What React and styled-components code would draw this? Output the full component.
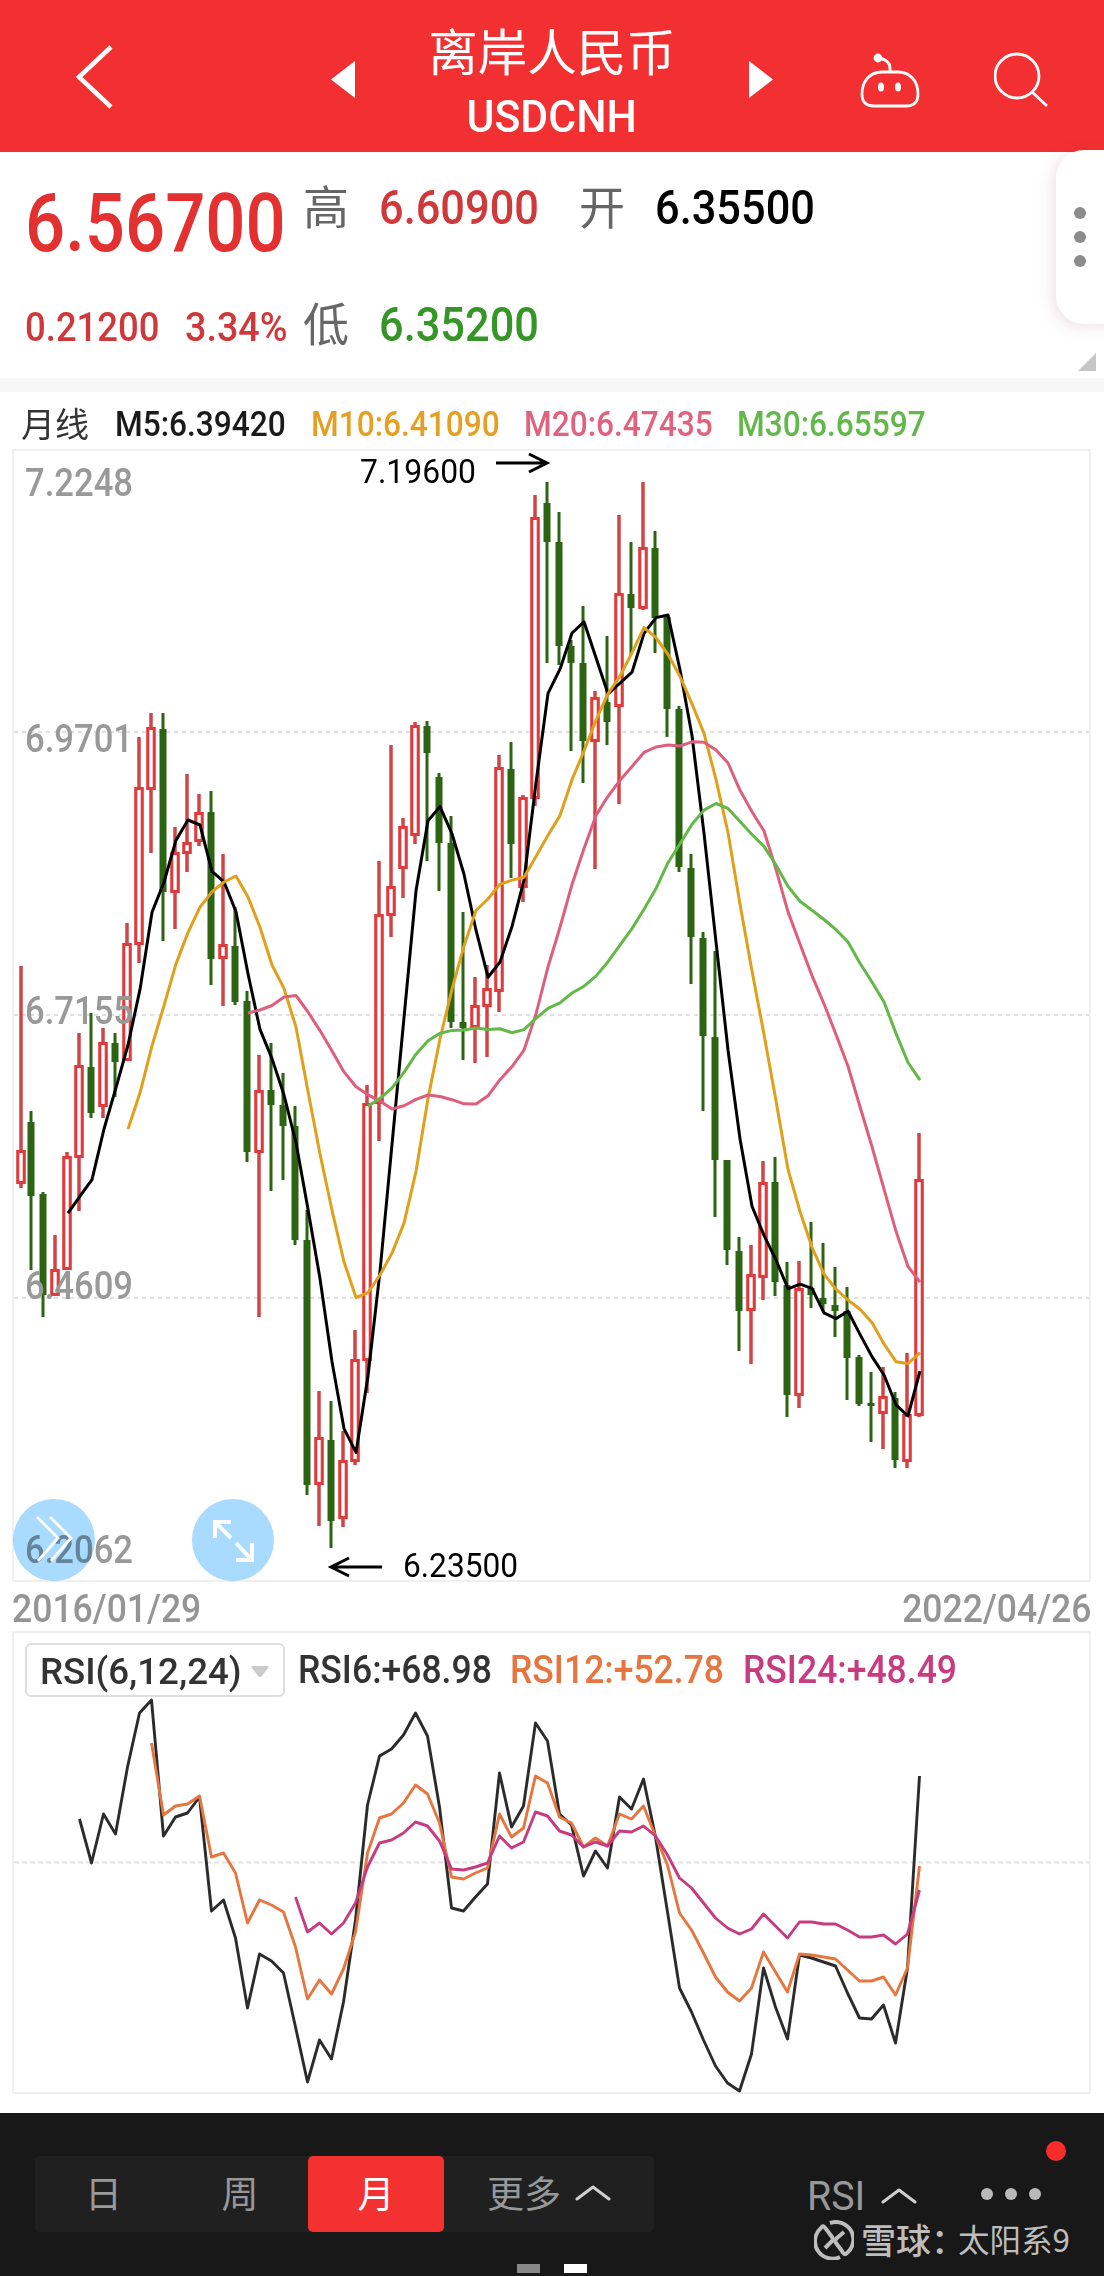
import styled, { createGlobalStyle } from "styled-components";

const GlobalStyle = createGlobalStyle`
  * {
    box-sizing: border-box;
  }

  body {
    margin: 0;
    background: #fff;
    font-family: Roboto, "Noto Sans CJK SC", sans-serif;
  }
`;

const Screen = styled.div`
  position: relative;
  width: 1104px;
  height: 2276px;
  overflow: hidden;
  background: #fff;
  display: flex;
  flex-direction: column;
`;

// narrow figures used for every quote value
const Num = styled.span`
  display: block;
  white-space: nowrap;
  line-height: 1;
  font-size: ${({ $size }) => $size}px;
  font-weight: ${({ $weight }) => $weight || 500};
  color: ${({ $color }) => $color};
  transform: scaleX(${({ $fit }) => $fit || 1});
  transform-origin: ${({ $origin }) => $origin || "left"} center;
`;

const Header = styled.header`
  flex: none;
  height: 152px;
  background: #f23031;
  display: grid;
  grid-template-columns: 331px 442px 87px 134px 110px;
  align-items: start;
`;

const BackIcon = styled.svg`
  display: block;
  margin: 42px 0 0 73px;
`;

const Switcher = styled.div`
  display: flex;
  justify-content: space-between;
`;

const Arrow = styled.svg`
  display: block;
  margin-top: 61px;
`;

const Titles = styled.div`
  display: flex;
  flex-direction: column;
  align-items: center;
  padding-top: 23px;
`;

const Title = styled.h1`
  margin: 0;
  font-family: "Noto Sans CJK SC", sans-serif;
  font-size: 49.5px;
  font-weight: 400;
  line-height: 54px;
  color: #fff;
`;

const Symbol = styled.div`
  height: 80px;
  display: flex;
  align-items: center;
`;

const HeaderIcon = styled.svg`
  display: block;
  margin-top: 46px;
`;

const Quote = styled.section`
  position: relative;
  flex: none;
  height: 226px;
  display: flex;
  padding-left: 25px;
`;

const Last = styled.div`
  width: 278px;
`;

const LastPrice = styled.div`
  height: 142px;
  display: flex;
  align-items: center;
`;

const Change = styled.div`
  height: 66px;
  display: grid;
  grid-template-columns: 160px 1fr;
  align-items: center;
`;

const Stats = styled.div`
  display: grid;
  grid-template-columns: 76px 200px 76px 200px;
  grid-template-rows: 110px 124px;
  align-items: center;
`;

const StatLabel = styled.span`
  font-family: "Noto Sans CJK SC", sans-serif;
  font-size: 46px;
  font-weight: 400;
  line-height: 1;
  color: #666;
  transform: translateY(-3px);
`;

const Corner = styled.svg`
  position: absolute;
  right: 8px;
  bottom: 7px;
`;

const Drawer = styled.div`
  position: absolute;
  top: 150px;
  right: -20px;
  width: 68px;
  height: 174px;
  padding: 0 20px 0 0;
  border-radius: 28px 0 0 28px;
  background: #fff;
  box-shadow: -4px 3px 16px rgba(120, 40, 60, 0.13);
  display: flex;
  flex-direction: column;
  align-items: center;
  justify-content: center;
  gap: 12px;
`;

const DrawerDot = styled.i`
  width: 12px;
  height: 12px;
  border-radius: 50%;
  background: #8c8c8c;
`;

const Divider = styled.div`
  flex: none;
  height: 14px;
  background: #f7f7f7;
`;

const Averages = styled.div`
  flex: none;
  height: 57px;
  padding: 8px 0 0 21px;
  display: grid;
  grid-template-columns: 94px 196px 213px 213px 200px;
  align-items: center;
`;

const Period = styled.span`
  font-family: "Noto Sans CJK SC", sans-serif;
  font-size: 34px;
  line-height: 1;
  color: #333;
  transform: translateY(-2px);
`;

const PricePanel = styled.section`
  position: relative;
  flex: none;
  width: 1079px;
  height: 1133px;
  margin-left: 12px;
  border: 2px solid #f0f0f0;
`;

const Plot = styled.svg`
  display: block;
  position: ${({ $over }) => ($over ? "absolute" : "static")};
  top: 0;
  left: 0;
  overflow: visible;
`;

const FloatButton = styled.button`
  position: absolute;
  left: ${({ $left }) => $left}px;
  bottom: -1px;
  width: 82px;
  height: 82px;
  padding: 0;
  border: 0;
  background: none;

  &::before {
    content: "";
    position: absolute;
    inset: 0;
    border-radius: 50%;
    background: #a8dbff;
    mix-blend-mode: multiply;
  }

  svg {
    position: relative;
    display: block;
  }
`;

const Dates = styled.div`
  flex: none;
  height: 49px;
  padding: 4px 13px 0 12px;
  display: flex;
  justify-content: space-between;
  align-items: center;
`;

const RsiPanel = styled.section`
  position: relative;
  flex: none;
  width: 1079px;
  height: 463px;
  margin-left: 12px;
  border: 2px solid #f0f0f0;
`;

const RsiBar = styled.div`
  position: relative;
  display: grid;
  grid-template-columns: 273px 212px 233px 1fr;
  align-items: center;
  padding: 10px 0 0 11px;
`;

const Select = styled.div`
  width: 260px;
  height: 54px;
  padding: 2px 14px 0 13px;
  border: 2px solid #dedede;
  border-radius: 6px;
  display: flex;
  align-items: center;
  justify-content: space-between;
`;

const Footer = styled.footer`
  position: relative;
  flex: none;
  height: 163px;
  margin-top: auto;
  background: #181818;
  display: flex;
  align-items: flex-start;
  padding: 43px 0 0 35px;
`;

const Segments = styled.div`
  width: 619px;
  height: 76px;
  border-radius: 5px;
  background: #202020;
  display: grid;
  grid-template-columns: 137px 136px 136px 210px;
`;

const Segment = styled.button`
  border: 0;
  padding: 0 0 3px;
  border-radius: 5px;
  background: ${({ $active }) => ($active ? "#f33131" : "transparent")};
  color: ${({ $active }) => ($active ? "#fff" : "#989898")};
  font-family: "Noto Sans CJK SC", sans-serif;
  font-size: 37px;
  font-weight: 400;
  line-height: 1;
  display: flex;
  align-items: center;
  justify-content: center;
  gap: 14px;
`;

const Indicator = styled.div`
  height: 80px;
  margin-left: 153px;
  display: flex;
  align-items: center;
  gap: 13px;
`;

const More = styled.div`
  height: 76px;
  margin-left: 64px;
  display: flex;
  align-items: center;
  gap: 12px;
`;

const MoreDot = styled.i`
  width: 12px;
  height: 12px;
  border-radius: 50%;
  background: #b9b9b9;
`;

const Unread = styled.i`
  position: absolute;
  top: 28px;
  right: 38px;
  width: 20px;
  height: 20px;
  border-radius: 50%;
  background: #f92c2c;
`;

const Watermark = styled.div`
  position: absolute;
  left: 814px;
  bottom: 16px;
  height: 40px;
  display: flex;
  align-items: center;
  color: #bdbdbd;
  font-family: "Noto Sans CJK SC", sans-serif;
  line-height: 40px;
`;

const Brand = styled.span`
  margin-left: 7px;
  width: 97px;
  font-size: 35px;
  font-weight: 500;
  white-space: nowrap;
  transform: translateY(-1px);
`;

const Author = styled.span`
  font-size: 31.5px;
  white-space: nowrap;
  transform: translateY(-2px);
`;

const Pager = styled.div`
  position: absolute;
  left: 517px;
  bottom: 3px;
  display: flex;
  gap: 24px;
`;

const Page = styled.i`
  width: 23px;
  height: 9px;
  background: ${({ $on }) => ($on ? "#fff" : "#888")};
`;

// [up, high, bodyTop, bodyBottom, low]
const candles = [
  [1, 966, 1150, 1184, 1188],
  [0, 1111, 1122, 1196, 1270],
  [0, 1192, 1194, 1295, 1317],
  [1, 1235, 1269, 1296, 1296],
  [1, 1152, 1156, 1270, 1270],
  [1, 1033, 1065, 1158, 1211],
  [0, 1013, 1067, 1113, 1118],
  [1, 1028, 1042, 1107, 1118],
  [0, 1033, 1043, 1062, 1097],
  [1, 923, 943, 1061, 1061],
  [1, 737, 787, 945, 963],
  [1, 713, 727, 790, 853],
  [0, 713, 729, 892, 941],
  [1, 827, 852, 893, 929],
  [1, 774, 842, 854, 872],
  [1, 794, 812, 842, 846],
  [0, 791, 812, 959, 985],
  [1, 854, 944, 959, 1006],
  [0, 907, 946, 1002, 1005],
  [0, 991, 1001, 1152, 1162],
  [1, 1055, 1090, 1153, 1317],
  [0, 1043, 1090, 1105, 1191],
  [0, 1073, 1105, 1126, 1180],
  [0, 1106, 1126, 1240, 1245],
  [0, 1210, 1240, 1485, 1495],
  [1, 1391, 1437, 1485, 1526],
  [0, 1401, 1440, 1521, 1548],
  [1, 1431, 1460, 1519, 1527],
  [1, 1330, 1359, 1462, 1465],
  [1, 1085, 1103, 1361, 1393],
  [1, 861, 914, 1104, 1141],
  [1, 745, 886, 916, 937],
  [1, 818, 826, 869, 898],
  [1, 722, 725, 836, 844],
  [0, 721, 726, 753, 861],
  [0, 773, 777, 843, 891],
  [0, 816, 843, 1022, 1028],
  [0, 912, 1022, 1028, 1060],
  [1, 977, 1005, 1028, 1063],
  [1, 965, 988, 1007, 1057],
  [1, 755, 767, 992, 1012],
  [0, 742, 769, 844, 878],
  [1, 795, 797, 888, 902],
  [1, 495, 517, 799, 806],
  [0, 482, 503, 542, 663],
  [0, 512, 542, 646, 665],
  [0, 640, 646, 663, 751],
  [0, 606, 663, 741, 783],
  [1, 691, 697, 742, 869],
  [0, 636, 702, 722, 745],
  [1, 515, 593, 707, 804],
  [0, 542, 594, 608, 655],
  [1, 482, 547, 609, 610],
  [0, 531, 548, 618, 653],
  [0, 614, 617, 709, 737],
  [0, 706, 709, 867, 872],
  [0, 854, 868, 937, 984],
  [0, 932, 938, 1036, 1111],
  [0, 951, 1037, 1160, 1217],
  [0, 1160, 1160, 1250, 1265],
  [0, 1237, 1251, 1311, 1351],
  [1, 1245, 1274, 1311, 1364],
  [1, 1161, 1182, 1278, 1300],
  [0, 1157, 1182, 1282, 1296],
  [0, 1262, 1285, 1395, 1417],
  [1, 1261, 1288, 1396, 1408],
  [0, 1222, 1288, 1295, 1308],
  [0, 1243, 1298, 1304, 1311],
  [0, 1267, 1305, 1311, 1337],
  [0, 1287, 1311, 1358, 1400],
  [0, 1355, 1357, 1404, 1406],
  [0, 1372, 1403, 1406, 1442],
  [1, 1367, 1396, 1414, 1449],
  [0, 1392, 1398, 1460, 1468],
  [1, 1353, 1414, 1462, 1468],
  [1, 1133, 1179, 1416, 1417],
];

const rsi6 = [
  1819, 1863, 1814, 1834, 1767, 1713, 1700, 1836, 1817, 1813, 1797, 1911, 1900,
  1938, 2008, 1954, 1961, 1973, 2027, 2082, 2040, 2059, 2002, 1920, 1805, 1756,
  1749, 1735, 1713, 1736, 1807, 1908, 1911, 1897, 1884, 1773, 1827, 1806, 1723,
  1741, 1814, 1825, 1876, 1851, 1868, 1797, 1809, 1779, 1837, 1912, 1988, 2012,
  2040, 2066, 2083, 2091, 2054, 1968, 2007, 2039, 1955, 1958, 1962, 1966, 1993,
  2018, 2019, 2005, 2043, 1968, 1776,
];

const rsi12 = [
  1743, 1815, 1806, 1804, 1796, 1857, 1853, 1873, 1923, 1900, 1905, 1912, 1947,
  1999, 1980, 1994, 1969, 1932, 1853, 1818, 1814, 1803, 1785, 1794, 1823, 1877,
  1879, 1873, 1868, 1814, 1837, 1828, 1776, 1783, 1817, 1823, 1847, 1838, 1846,
  1814, 1819, 1806, 1836, 1865, 1913, 1930, 1953, 1977, 1992, 2001, 1988, 1952,
  1972, 1992, 1954, 1955, 1957, 1959, 1970, 1981, 1981, 1977, 1995, 1968, 1866,
];

const rsi24 = [
  1897, 1932, 1923, 1934, 1923, 1903, 1867, 1843, 1840, 1833, 1822, 1826, 1841,
  1869, 1870, 1867, 1863, 1836, 1848, 1842, 1812, 1816, 1831, 1835, 1847, 1842,
  1846, 1831, 1832, 1826, 1836, 1855, 1878, 1888, 1903, 1918, 1928, 1934, 1929,
  1914, 1926, 1938, 1922, 1922, 1924, 1924, 1930, 1937, 1937, 1935, 1944, 1934,
  1890,
];

const axis = [
  { label: "7.2248", y: 495.5 },
  { label: "6.9701", y: 751.5 },
  { label: "6.7155", y: 1023.5 },
  { label: "6.4609", y: 1298.5 },
  { label: "6.2062", y: 1562.5 },
];

const averages = [
  { text: "M5:6.39420", color: "#1a1a1a", days: 5, stroke: "#000" },
  { text: "M10:6.41090", color: "#e5a023", days: 10, stroke: "#e0a01c" },
  { text: "M20:6.47435", color: "#e0627f", days: 20, stroke: "#de5f7d" },
  { text: "M30:6.65597", color: "#62b84a", days: 30, stroke: "#62b848" },
];

const candleX = (i) => (i === 0 ? 21 : 19 + i * 12);

const closes = candles.map(([up, , top, bottom]) => (up ? top : bottom));

const movingAverage = (days) =>
  closes
    .map((_, i) => {
      if (i < days - 1) return null;
      const sum = closes.slice(i - days + 1, i + 1).reduce((a, b) => a + b, 0);
      return `${candleX(i) + 1},${(sum / days).toFixed(1)}`;
    })
    .filter(Boolean)
    .join(" ");

const series = (values) => {
  const start = candles.length - values.length;
  return values.map((y, i) => `${candleX(start + i) + 0.5},${y}`).join(" ");
};

function Candle({ x, data }) {
  const [up, high, top, bottom, low] = data;
  if (!up) {
    return (
      <g fill="#2d6413">
        <rect x={x - 1.5} y={high} width="3" height={low - high} />
        <rect x={x - 3.5} y={top} width="7" height={bottom - top} />
      </g>
    );
  }
  return (
    <g>
      <rect x={x - 1.75} y={high} width="3.5" height={low - high} fill="#cf4547" />
      <rect
        x={x - 3.25}
        y={top + 1.5}
        width="6.5"
        height={bottom - top - 3}
        fill="#fff"
        stroke="#df3b3d"
        strokeWidth="3.1"
      />
    </g>
  );
}

function PriceChart() {
  return (
    <PricePanel>
      <Plot width="1075" height="1129" viewBox="14 451 1075 1129">
        {[732, 1015, 1298].map((y) => (
          <line
            key={y}
            x1="14"
            x2="1089"
            y1={y}
            y2={y}
            stroke="#d6d6d6"
            strokeWidth="1.6"
            strokeDasharray="4 4"
          />
        ))}
        {candles.map((data, i) => (
          <Candle key={i} x={candleX(i)} data={data} />
        ))}
        {averages.map(({ days, stroke }) => (
          <polyline
            key={days}
            points={movingAverage(days)}
            fill="none"
            stroke={stroke}
            strokeWidth="3"
            strokeLinejoin="round"
          />
        ))}
        <g fontSize="38" fontWeight="500" fill="#999">
          {axis.map(({ label, y }) => (
            <text key={label} x="25" y={y} textLength="108" lengthAdjust="spacingAndGlyphs">
              {label}
            </text>
          ))}
        </g>
        <g fontSize="32.5" fill="#000">
          <text x="360" y="483" textLength="116" lengthAdjust="spacingAndGlyphs">
            7.19600
          </text>
          <text x="403" y="1577" textLength="115" lengthAdjust="spacingAndGlyphs">
            6.23500
          </text>
        </g>
        <g fill="none" stroke="#000" strokeWidth="3">
          <path d="M496 463h51M529 454l18 9l-18 9" />
          <path d="M382 1567h-50M349 1558l-18 9l18 9" />
        </g>
      </Plot>
      <FloatButton $left={-1}>
        <svg width="82" height="82" fill="none" stroke="#fff" strokeWidth="2.8">
          <path d="M24 18l21 21l-20 23M37 18l21 21l-20 23" />
        </svg>
      </FloatButton>
      <FloatButton $left={178}>
        <svg width="82" height="82" fill="none" stroke="#fff" strokeWidth="4">
          <path d="M39 23H23V39M24 24L39 39M44 61H60V44M59 60L44 44" />
        </svg>
      </FloatButton>
    </PricePanel>
  );
}

function RsiChart() {
  return (
    <RsiPanel>
      <Plot $over width="1075" height="459" viewBox="14 1633 1075 459">
        <line
          x1="14"
          x2="1089"
          y1="1862.5"
          y2="1862.5"
          stroke="#e2e2e2"
          strokeWidth="2"
          strokeDasharray="5 3"
        />
        <g fill="none" strokeWidth="2.9" strokeLinejoin="round">
          <polyline points={series(rsi6)} stroke="#2b2b2b" />
          <polyline points={series(rsi12)} stroke="#e6753f" />
          <polyline points={series(rsi24)} stroke="#c73c80" />
        </g>
      </Plot>
      <RsiBar>
        <Select>
          <Num $size={37} $fit={0.99} $color="#333">
            RSI(6,12,24)
          </Num>
          <svg width="18" height="11" fill="#cbcbcb">
            <path d="M1 0h16q1 1 0 2l-6 8q-2 2-4 0l-6-8q-1-1 0-2z" />
          </svg>
        </Select>
        <Num $size={38} $fit={0.935} $color="#333">
          RSI6:+68.98
        </Num>
        <Num $size={38} $fit={0.935} $color="#e6753f">
          RSI12:+52.78
        </Num>
        <Num $size={38} $fit={0.935} $color="#c73c80">
          RSI24:+48.49
        </Num>
      </RsiBar>
    </RsiPanel>
  );
}

function Caret() {
  return (
    <svg width="36" height="18" fill="none" stroke="#cfcfcf" strokeWidth="3">
      <path d="M2 15L18 3L34 15" strokeLinecap="round" strokeLinejoin="round" />
    </svg>
  );
}

export default function App() {
  return (
    <>
      <GlobalStyle />
      <Screen>
        <Header>
          <BackIcon width="46" height="70" fill="none" stroke="#fff" strokeWidth="4.5">
            <path d="M38 5L6 35L38 65" />
          </BackIcon>
          <Switcher>
            <Arrow width="24" height="37" fill="#fff">
              <path d="M0 18.5L24 0V37z" />
            </Arrow>
            <Titles>
              <Title>离岸人民币</Title>
              <Symbol>
                <Num $size={44.5} $fit={0.96} $color="#fff" $origin="center">
                  USDCNH
                </Num>
              </Symbol>
            </Titles>
            <Arrow width="24" height="37" fill="#fff">
              <path d="M24 18.5L0 0V37z" />
            </Arrow>
          </Switcher>
          <span />
          <HeaderIcon width="62" height="64" fill="none" stroke="#fff" strokeWidth="2.8">
            <path d="M22 26H38C51 26 58 36 58 48C58 57 53 60 46 60H14C7 60 2 57 2 48C2 36 9 26 22 26z" />
            <path d="M30 26V22Q30 14 19 12" />
            <circle cx="18" cy="12" r="3" fill="#fff" />
            <ellipse cx="21" cy="41" rx="3" ry="4.6" fill="#fff" stroke="none" />
            <ellipse cx="38" cy="41" rx="3" ry="4.6" fill="#fff" stroke="none" />
          </HeaderIcon>
          <HeaderIcon width="56" height="64" fill="none" stroke="#fff" strokeWidth="2.8">
            <circle cx="23" cy="30" r="22" />
            <path d="M38 46L53 60" />
          </HeaderIcon>
        </Header>

        <Quote>
          <Last>
            <LastPrice>
              <Num $size={82} $fit={0.862} $color="#e33132">
                6.56700
              </Num>
            </LastPrice>
            <Change>
              <Num $size={41} $fit={0.89} $color="#d0393b">
                0.21200
              </Num>
              <Num $size={41} $fit={0.92} $color="#d0393b">
                3.34%
              </Num>
            </Change>
          </Last>
          <Stats>
            <StatLabel>高</StatLabel>
            <Num $size={49} $fit={0.885} $color="#d0393b">
              6.60900
            </Num>
            <StatLabel>开</StatLabel>
            <Num $size={49} $fit={0.885} $color="#000">
              6.35500
            </Num>
            <StatLabel>低</StatLabel>
            <Num $size={49} $fit={0.885} $color="#359526">
              6.35200
            </Num>
          </Stats>
          <Corner width="18" height="18" fill="#c6c6c6">
            <path d="M18 0V18H0z" />
          </Corner>
        </Quote>

        <Divider />

        <Averages>
          <Period>月线</Period>
          {averages.map(({ text, color }) => (
            <Num key={text} $size={35} $fit={0.905} $color={color}>
              {text}
            </Num>
          ))}
        </Averages>

        <PriceChart />

        <Dates>
          <Num $size={38} $fit={0.935} $color="#959595">
            2016/01/29
          </Num>
          <Num $size={38} $fit={0.935} $color="#959595" $origin="right">
            2022/04/26
          </Num>
        </Dates>

        <RsiChart />

        <Footer>
          <Segments>
            <Segment>日</Segment>
            <Segment>周</Segment>
            <Segment $active>月</Segment>
            <Segment>
              更多
              <Caret />
            </Segment>
          </Segments>
          <Indicator>
            <Num $size={41} $weight={400} $fit={0.96} $color="#989898">
              RSI
            </Num>
            <Caret />
          </Indicator>
          <More>
            <MoreDot />
            <MoreDot />
            <MoreDot />
          </More>
          <Unread />
          <Watermark>
            <svg width="40" height="40" fill="none" stroke="#bdbdbd" strokeWidth="4">
              <path d="M16 3A17.5 17.5 0 0 1 33 33Q30 36 28 31L22 23Q20 20 23 18L30 12" />
              <path d="M26 37A17.5 17.5 0 0 1 7 8Q9 4 12 9L18 17Q20 20 17 22L11 28" />
            </svg>
            <Brand>雪球：</Brand>
            <Author>太阳系9</Author>
          </Watermark>
          <Pager>
            <Page />
            <Page $on />
          </Pager>
        </Footer>

        <Drawer>
          <DrawerDot />
          <DrawerDot />
          <DrawerDot />
        </Drawer>
      </Screen>
    </>
  );
}
